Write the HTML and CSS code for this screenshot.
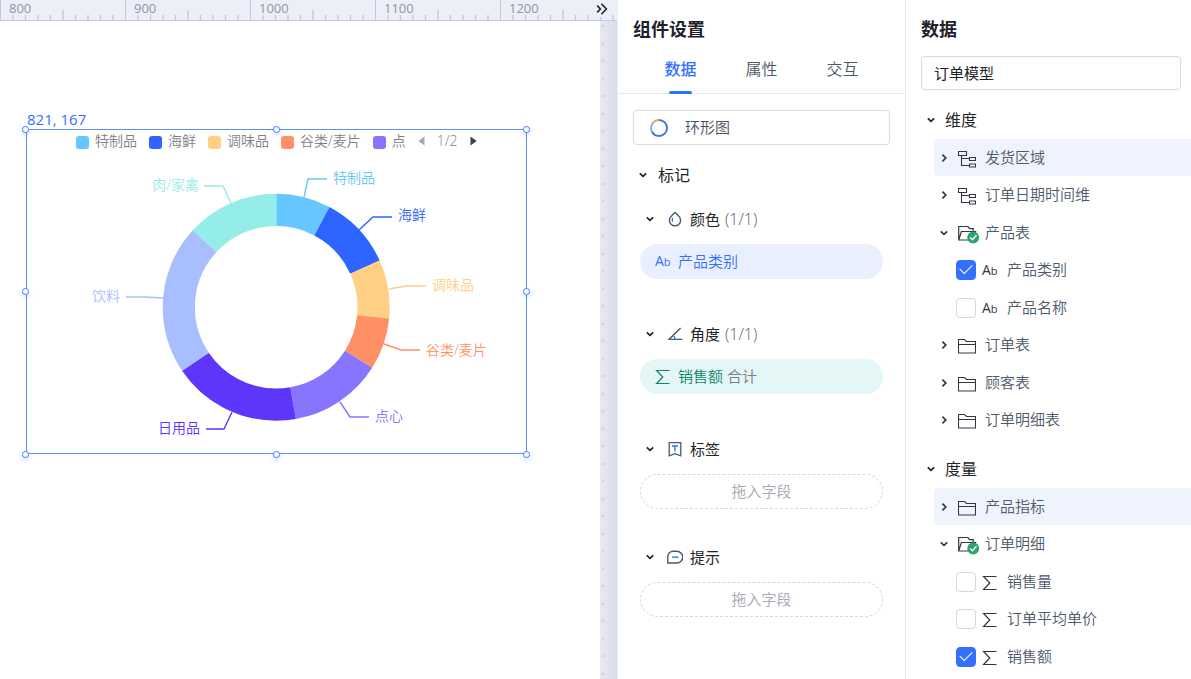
FILE: index.html
```html
<!DOCTYPE html>
<html lang="zh-CN">
<head>
<meta charset="utf-8">
<meta name="viewport" content="width=device-width, initial-scale=1">
<title>组件设置</title>
<link rel="stylesheet" href="styles.css">
</head>
<body>
<svg class="defs" width="0" height="0" aria-hidden="true">
  <symbol id="down" viewBox="0 0 10 10"><path d="M1.8 3.4 5 6.4 8.2 3.4" fill="none" stroke="currentColor" stroke-width="1.7"/></symbol>
  <symbol id="right" viewBox="0 0 10 10"><path d="M3.4 1.6 6.8 5 3.4 8.4" fill="none" stroke="currentColor" stroke-width="1.7"/></symbol>
  <symbol id="tree" viewBox="0 0 18 18"><g fill="none" stroke="currentColor" stroke-width="1.1"><path d="M.5 1.500h8v4h-8zM3.500 5.500v10h7.500M3.500 8.500h7.500M11.500 7.500h6v3h-6zM11.500 14h6v3h-6z"/></g></symbol>
  <symbol id="folder" viewBox="0 0 18 18"><path d="M.5 2.500h6l2 2h9v11.500h-17zM.5 7.500h17" fill="none" stroke="currentColor" stroke-width="1.1"/></symbol>
  <symbol id="folder-open" viewBox="0 0 22 20"><path d="M.7 16V2.500h9.200l1.800 2.200h3.500V7.500M.7 16 3.400 7.500h14.200l-2.600 8.500z" fill="none" stroke="currentColor" stroke-width="1.2"/><circle cx="15.200" cy="13.500" r="5.900" fill="#2ba471"/><path d="m12.200 13.400 2.300 2.300 4-4.400" fill="none" stroke="#fff" stroke-width="1.4"/></symbol>
  <symbol id="sigma" viewBox="0 0 16 16"><path d="M14.500 1.500H1.600L7.800 8l-6.200 6.500h12.900" fill="none" stroke="currentColor" stroke-width="1.2"/></symbol>
</svg>
<div class="app">
  <main class="stage">
    <div class="ruler">
      <svg class="ruler-ticks" aria-hidden="true">
        <defs><pattern id="ticks" width="125" height="20" patternUnits="userSpaceOnUse">
          <path d="M.5 0v20" stroke="#c5c9db"/>
          <path d="M13 15v5M25.500 15v5M38 15v5M50.500 15v5M63 10v10M75.500 15v5M88 15v5M100.500 15v5M113 15v5" stroke="#c5c9db" stroke-width="1.4"/>
        </pattern></defs>
        <rect width="100%" height="20" fill="url(#ticks)"/>
      </svg>
      <span>800</span><span>900</span><span>1000</span><span>1100</span><span>1200</span>
      <button class="collapse" aria-label="收起"><svg width="16" height="16" viewBox="0 0 16 16"><path d="M3.200 4.600 6.400 8 3.200 11.400M7.400 2.800l5 5.200-5 5.200" fill="none" stroke="#1f2329" stroke-width="1.6"/></svg></button>
    </div>
    <div class="canvas">
      <div class="page"></div>
      <div class="gutter"></div>
      <section class="widget" aria-label="环形图">
        <span class="coords">821, 167</span>
        <div class="legend">
          <span class="key key-sky">特制品</span>
          <span class="key key-blue">海鲜</span>
          <span class="key key-sand">调味品</span>
          <span class="key key-coral">谷类/麦片</span>
          <span class="key key-violet">点</span>
          <span class="pager">
            <button aria-label="上一页"><svg width="7" height="10" viewBox="0 0 7 10"><path d="M6.5.4v9.2L.3 5z" fill="#aaa"/></svg></button>
            <span>1/2</span>
            <button aria-label="下一页"><svg width="7" height="10" viewBox="0 0 7 10"><path d="M.5.4v9.2L6.7 5z" fill="#2f4554"/></svg></button>
          </span>
        </div>
        <svg class="chart" viewBox="0 0 501 325">
          <g class="ring" transform="rotate(-90 250.2 178.2)" fill="none" stroke-width="32.2">
            <circle cx="250.2" cy="178.2" r="97.4" pathLength="360" stroke="#66c7ff" stroke-dasharray="28 332"/>
            <circle cx="250.2" cy="178.2" r="97.4" pathLength="360" stroke="#2e64ff" stroke-dasharray="37.6 322.4" stroke-dashoffset="-28"/>
            <circle cx="250.2" cy="178.2" r="97.4" pathLength="360" stroke="#ffcf85" stroke-dasharray="30.2 329.8" stroke-dashoffset="-65.6"/>
            <circle cx="250.2" cy="178.2" r="97.4" pathLength="360" stroke="#ff9066" stroke-dasharray="26.5 333.5" stroke-dashoffset="-95.8"/>
            <circle cx="250.2" cy="178.2" r="97.4" pathLength="360" stroke="#8875ff" stroke-dasharray="47.7 312.3" stroke-dashoffset="-122.3"/>
            <circle cx="250.2" cy="178.2" r="97.4" pathLength="360" stroke="#5e35fa" stroke-dasharray="66 294" stroke-dashoffset="-170"/>
            <circle cx="250.2" cy="178.2" r="97.4" pathLength="360" stroke="#a8beff" stroke-dasharray="76.7 283.3" stroke-dashoffset="-236"/>
            <circle cx="250.2" cy="178.2" r="97.4" pathLength="360" stroke="#94ede8" stroke-dasharray="47.3 312.7" stroke-dashoffset="-312.7"/>
          </g>
          <g class="leaders" fill="none" stroke-width="1.4">
            <path stroke="#66c7ff" d="m278 68 4-18h19"/>
            <path stroke="#2e64ff" d="m333 101 14-13h19"/>
            <path stroke="#ffcf85" d="m363 160 17-3h20"/>
            <path stroke="#ff9066" d="m358 215 17 6h19"/>
            <path stroke="#8875ff" d="m314 273 10 15h19"/>
            <path stroke="#5e35fa" d="m206 283-8 17h-18"/>
            <path stroke="#a8beff" d="m137 169-19-1h-18"/>
            <path stroke="#94ede8" d="m205 74-8-17h-19"/>
          </g>
          <text x="307" y="54" fill="#66c7ff">特制品</text>
          <text x="372" y="91" fill="#2e64ff">海鲜</text>
          <text x="406" y="161" fill="#ffcf85">调味品</text>
          <text x="400" y="226" fill="#ff9066">谷类/麦片</text>
          <text x="349" y="292" fill="#8875ff">点心</text>
          <text x="174" y="304" fill="#5e35fa" text-anchor="end">日用品</text>
          <text x="94" y="172" fill="#a8beff" text-anchor="end">饮料</text>
          <text x="173" y="61" fill="#94ede8" text-anchor="end">肉/家禽</text>
        </svg>
        <i class="grip top left"></i><i class="grip top mid"></i><i class="grip top end"></i>
        <i class="grip center left"></i><i class="grip center end"></i>
        <i class="grip bottom left"></i><i class="grip bottom mid"></i><i class="grip bottom end"></i>
      </section>
    </div>
  </main>

  <aside class="panel settings">
    <h2>组件设置</h2>
    <div class="tabs" role="tablist">
      <button role="tab" class="tab active" aria-selected="true">数据</button>
      <button role="tab" class="tab" aria-selected="false">属性</button>
      <button role="tab" class="tab" aria-selected="false">交互</button>
    </div>
    <button class="type">
      <svg width="20" height="20" viewBox="0 0 20 20" fill="none" stroke-width="2"><circle cx="10" cy="10" r="8" stroke="#4a6fe8" pathLength="100" stroke-dasharray="68 32" transform="rotate(-90 10 10)"/><circle cx="10" cy="10" r="8" stroke="#8fa8f8" pathLength="100" stroke-dasharray="20 80" stroke-dashoffset="-68" transform="rotate(-90 10 10)"/><circle cx="10" cy="10" r="8" stroke="#f0a050" pathLength="100" stroke-dasharray="12 88" stroke-dashoffset="-88" transform="rotate(-90 10 10)"/></svg>
      环形图
    </button>
    <h3 class="section"><button class="fold" aria-label="折叠标记"><svg class="caret"><use href="#down"/></svg></button>标记</h3>
    <div class="marks">
      <div class="mark">
        <div class="mark-head"><button class="fold" aria-label="折叠颜色"><svg class="caret"><use href="#down"/></svg></button>
          <svg width="16" height="16" viewBox="0 0 16 16" fill="none"><path d="M8 1.400C5.600 3.600 2.400 6 2.400 9.200a5.600 5.600 0 0 0 11.200 0C13.600 6 10.400 3.600 8 1.400z" stroke="#4e5969" stroke-width="1.400"/><path d="M5.400 6.800v4" stroke="#3370ff" stroke-width="1.300"/></svg>
          <span>颜色 <small>(1/1)</small></span></div>
        <div class="pill pill-dimension"><span class="ab">A<b>b</b></span><span>产品类别</span></div>
      </div>
      <div class="mark">
        <div class="mark-head"><button class="fold" aria-label="折叠角度"><svg class="caret"><use href="#down"/></svg></button>
          <svg width="16" height="16" viewBox="0 0 16 16" fill="none"><path d="M13.600 2 2 13.400h13.400" stroke="#4e5969" stroke-width="1.400"/><path d="M6.200 9.600c1.300 1 1.800 2.200 1.800 3.600" stroke="#3370ff" stroke-width="1.300"/></svg>
          <span>角度 <small>(1/1)</small></span></div>
        <div class="pill pill-measure"><svg class="sigma"><use href="#sigma"/></svg><span>销售额 <em>合计</em></span></div>
      </div>
      <div class="mark empty">
        <div class="mark-head"><button class="fold" aria-label="折叠标签"><svg class="caret"><use href="#down"/></svg></button>
          <svg width="16" height="16" viewBox="0 0 16 16" fill="none"><path d="M2.200 1.600h11.600v13.200L8 12.600l-5.800 2.200z" stroke="#4e5969" stroke-width="1.300"/><path d="M5 5h6M8 5v5.400" stroke="#3370ff" stroke-width="1.400"/></svg>
          <span>标签</span></div>
        <div class="pill pill-drop">拖入字段</div>
      </div>
      <div class="mark empty">
        <div class="mark-head"><button class="fold" aria-label="折叠提示"><svg class="caret"><use href="#down"/></svg></button>
          <svg width="16" height="16" viewBox="0 0 16 16" fill="none"><path d="M.8 14V7.600a5.400 5.400 0 0 1 5.400-5.400h3.600a5.900 5.900 0 0 1 0 11.800z" stroke="#4e5969" stroke-width="1.400"/><path d="M5 8.200h6.400" stroke="#3370ff" stroke-width="1.400"/></svg>
          <span>提示</span></div>
        <div class="pill pill-drop">拖入字段</div>
      </div>
    </div>
  </aside>

  <aside class="panel data">
    <h2>数据</h2>
    <select class="model" aria-label="数据模型"><option>订单模型</option></select>
    <h3 class="section"><button class="fold" aria-label="折叠维度"><svg class="caret"><use href="#down"/></svg></button>维度</h3>
    <ul class="fields">
      <li class="row active"><button class="fold" aria-label="展开发货区域"><svg class="caret"><use href="#right"/></svg></button><svg class="icon"><use href="#tree"/></svg>发货区域</li>
      <li class="row"><button class="fold" aria-label="展开订单日期时间维"><svg class="caret"><use href="#right"/></svg></button><svg class="icon"><use href="#tree"/></svg>订单日期时间维</li>
      <li class="row"><button class="fold" aria-label="折叠产品表"><svg class="caret"><use href="#down"/></svg></button><svg class="icon open"><use href="#folder-open"/></svg>产品表</li>
      <li class="row leaf"><label><input type="checkbox" checked><span class="ab">A<b>b</b></span>产品类别</label></li>
      <li class="row leaf"><label><input type="checkbox"><span class="ab">A<b>b</b></span>产品名称</label></li>
      <li class="row"><button class="fold" aria-label="展开订单表"><svg class="caret"><use href="#right"/></svg></button><svg class="icon"><use href="#folder"/></svg>订单表</li>
      <li class="row"><button class="fold" aria-label="展开顾客表"><svg class="caret"><use href="#right"/></svg></button><svg class="icon"><use href="#folder"/></svg>顾客表</li>
      <li class="row"><button class="fold" aria-label="展开订单明细表"><svg class="caret"><use href="#right"/></svg></button><svg class="icon"><use href="#folder"/></svg>订单明细表</li>
    </ul>
    <h3 class="section"><button class="fold" aria-label="折叠度量"><svg class="caret"><use href="#down"/></svg></button>度量</h3>
    <ul class="fields">
      <li class="row active"><button class="fold" aria-label="展开产品指标"><svg class="caret"><use href="#right"/></svg></button><svg class="icon"><use href="#folder"/></svg>产品指标</li>
      <li class="row"><button class="fold" aria-label="折叠订单明细"><svg class="caret"><use href="#down"/></svg></button><svg class="icon open"><use href="#folder-open"/></svg>订单明细</li>
      <li class="row leaf"><label><input type="checkbox"><svg class="sigma"><use href="#sigma"/></svg>销售量</label></li>
      <li class="row leaf"><label><input type="checkbox"><svg class="sigma"><use href="#sigma"/></svg>订单平均单价</label></li>
      <li class="row leaf"><label><input type="checkbox" checked><svg class="sigma"><use href="#sigma"/></svg>销售额</label></li>
    </ul>
  </aside>
</div>
</body>
</html>
```
FILE: styles.css
```css
* { box-sizing: border-box; }

body {
  margin: 0;
  font: 350 15px/20px "Open Sans", "Noto Sans CJK SC", sans-serif;
  color: #1f2329;
  background: #fff;
}

button, select, input { font: inherit; color: inherit; margin: 0; }
button { padding: 0; border: 0; background: none; cursor: pointer; }
svg { display: block; flex: none; }
.defs { position: absolute; }

.app { display: flex; min-height: 100vh; }

/* Stage */
.stage { flex: 1; min-width: 0; display: flex; flex-direction: column; border-right: 1px solid #eceef4; }

.ruler {
  position: relative;
  display: flex;
  height: 21px;
  overflow: hidden;
  background: #eceef8;
  border-bottom: 1px solid #c5c9db;
  font-size: 13px;
  font-weight: 400;
  line-height: 16px;
  color: #9095a8;
}
.ruler-ticks { position: absolute; inset: 0; width: 100%; height: 20px; }
.ruler span { flex: 0 0 125px; padding-left: 9px; z-index: 1; }
.collapse { position: absolute; top: 1px; right: 7px; background: #eceef8; }

.canvas { flex: 1; position: relative; display: flex; }
.page { flex: 1; }
.gutter {
  width: 17px;
  background:
    radial-gradient(circle at 3px 5px, #d3d6e0 1px, transparent 2px) 0 0 / 17px 35px repeat-y,
    radial-gradient(circle at 3px 5px, #d3d6e0 1px, transparent 2px) 0 18px / 17px 35px repeat-y,
    linear-gradient(90deg, #e9eaf0, #d9dde8);
}

/* Selected chart */
.widget {
  position: absolute;
  left: 26px;
  top: 108px;
  width: 501px;
  outline: 1px solid #5b8ff5;
  outline-offset: -1px;
}
.coords { position: absolute; left: 1px; top: -20px; color: #3370ff; font-weight: 400; }
.chart { width: 100%; height: auto; font-size: 14px; font-weight: 350; }
.legend {
  position: absolute;
  top: 2px;
  left: 50px;
  display: flex;
  gap: 12px;
  font-size: 14px;
  color: #7c828c;
  white-space: nowrap;
}
.key { display: flex; align-items: center; gap: 6px; }
.key::before { content: ""; width: 13px; height: 13px; margin-top: 2px; border-radius: 3px; background: currentColor; }
.key-sky::before { background: #66c7ff; }
.key-blue::before { background: #2e64ff; }
.key-sand::before { background: #ffcf85; }
.key-coral::before { background: #ff9066; }
.key-violet::before { background: #8875ff; }
.pager { display: flex; align-items: center; gap: 12px; }

.grip {
  position: absolute;
  width: 7px;
  height: 7px;
  margin: -4px;
  border: 1px solid #3f7cff;
  border-radius: 50%;
  background: #fff;
  box-shadow: 0 2px 4px #3370ff40;
}
.grip.top { top: 1px; }
.grip.center { top: 50%; }
.grip.bottom { bottom: 0; }
.grip.left { left: 0; }
.grip.mid { left: 50%; }
.grip.end { right: 1px; }

/* Side panels */
.panel h2 { margin: 0; font-size: 18px; line-height: 24px; font-weight: 700; color: #1d2129; }
.section { display: flex; align-items: center; margin: 0; font-size: 16px; font-weight: 400; }
.fold { width: 20px; height: 20px; display: grid; place-items: center; flex: none; }
.caret { width: 10px; height: 10px; }
.sigma { width: 16px; height: 16px; }
.ab { display: block; width: 16px; font-size: 14px; white-space: nowrap; font-weight: 400; }
.ab b { font-size: 11px; font-weight: 400; }

.settings { width: 287px; padding-top: 17px; }
.settings h2 { padding: 0 15px; }
.tabs {
  display: grid;
  grid-template-columns: repeat(3, 1fr);
  padding: 5px 22px 0;
  border-bottom: 1px solid #e8eaf0;
}
.tab { position: relative; height: 47px; padding-bottom: 2px; font-size: 16px; color: #4e5969; }
.tab.active { color: #3370ff; font-weight: 500; }
.tab.active::after {
  content: "";
  position: absolute;
  left: 50%;
  bottom: -1px;
  width: 23px;
  height: 3px;
  margin-left: -12px;
  border-radius: 2px;
  background: #3370ff;
}
.type {
  display: flex;
  align-items: center;
  gap: 16px;
  width: calc(100% - 30px);
  height: 35px;
  margin: 16px 15px 0;
  padding: 0 15px 2px;
  border: 1px solid #d9dce8;
  border-radius: 4px;
  color: #4a4f5a;
}
.type svg { margin-top: 2px; }
.settings .section { height: 38px; margin-top: 11px; padding-left: 15px; gap: 5px; }
.marks { padding: 10px 22px; }
.mark { display: grid; gap: 10px; margin-bottom: 40px; }
.mark.empty { margin-bottom: 33px; }
.mark-head { display: flex; align-items: center; height: 30px; gap: 7px; font-weight: 400; }
.mark-head small { padding-left: 1px; font-size: 16px; font-weight: 350; color: #5d626b; }
.pill { display: flex; align-items: center; gap: 7px; height: 35px; padding: 0 15px 2px; border-radius: 18px; }
.pill .ab, .pill .sigma { margin-top: 2px; }
.pill-dimension { background: #eaeffe; color: #3370ff; }
.pill-measure { background: #e4f6f6; color: #0f8568; }
.pill em { font-style: normal; color: #7c8087; }
.pill-drop { justify-content: center; border: 1px dashed #d3d6e6; color: #a5aab3; }

.data { width: 286px; padding: 17px 0 0 15px; border-left: 1px solid #e8eaf2; }
.model {
  display: block;
  width: calc(100% - 10px);
  height: 34px;
  margin: 15px 0 11px;
  padding: 0 12px;
  appearance: none;
  border: 1px solid #d5d8e6;
  border-radius: 4px;
  background: #fff;
  font-weight: 400;
}
.data .section { height: 38px; gap: 4px; }
.fields { list-style: none; margin: 0 0 12px; padding: 0 0 0 13px; }
.row {
  display: flex;
  align-items: center;
  height: 37px;
  padding-bottom: 2px;
  border-radius: 4px 0 0 4px;
  color: #4e5969;
}
.row .fold { margin-top: 2px; }
.row:nth-child(even) { margin-bottom: 1px; }
.row.active { background: #eff3fe; }
.row svg, .row .ab { color: #333840; }
.icon { width: 18px; height: 18px; margin: 4px 9px 0 4px; }
.icon.open { width: 22px; height: 20px; margin-right: 5px; }
.leaf { padding-left: 22px; }
.leaf label { display: flex; align-items: center; }
.leaf .ab, .leaf .sigma { margin: 4px 9px 0 6px; }
.leaf input {
  appearance: none;
  width: 20px;
  height: 20px;
  margin-top: 2px;
  border: 1px solid #d3d6e6;
  border-radius: 4px;
  background: #fff;
}
.leaf input:checked { display: grid; place-items: center; border-color: #3370ff; background: #3370ff; }
.leaf input:checked::after {
  content: "";
  width: 11px;
  height: 6px;
  margin-bottom: 4px;
  border: solid #fff;
  border-width: 0 0 1px 1px;
  transform: rotate(-45deg);
}
```
